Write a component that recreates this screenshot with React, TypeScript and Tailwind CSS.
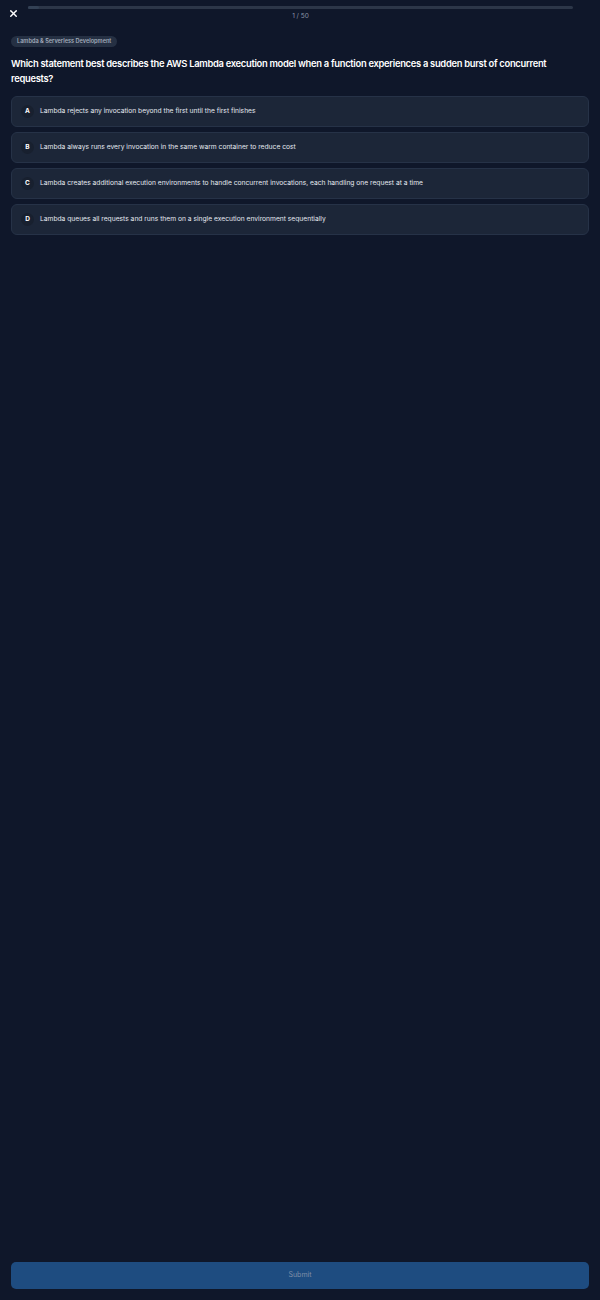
import { X } from 'lucide-react';

const OPTIONS = [
  { key: 'A', text: 'Lambda rejects any invocation beyond the first until the first finishes' },
  { key: 'B', text: 'Lambda always runs every invocation in the same warm container to reduce cost' },
  {
    key: 'C',
    text: 'Lambda creates additional execution environments to handle concurrent invocations, each handling one request at a time',
  },
  { key: 'D', text: 'Lambda queues all requests and runs them on a single execution environment sequentially' },
];

export default function App() {
  return (
    <div className="h-screen bg-[#0f172a] flex flex-col font-['Inter',sans-serif] text-white">
      {/* Top bar */}
      <div className="flex items-center pl-[8px] pr-[27px] pt-[6px]">
        <button className="w-[11px] h-[11px] flex items-center justify-center text-white">
          <X size={11} strokeWidth={3.2} />
        </button>
        <div className="flex-1 ml-[9px] flex flex-col items-center">
          <div className="w-full h-[3px] rounded-full bg-[#2c3648]">
            <div className="h-full w-[2%] rounded-full bg-[#334155]" />
          </div>
          <span className="mt-[3px] text-[6.5px] leading-[8px] text-[#8a94a6]">1 / 50</span>
        </div>
      </div>

      <div className="px-[11px] flex-1 flex flex-col">
        {/* Topic */}
        <div className="mt-[16px] flex">
          <span className="inline-flex items-center h-[11px] px-[6px] rounded-full bg-[#253043] text-[5.6px] leading-none font-semibold text-[#a3acbb]">
            Lambda &amp; Serverless Development
          </span>
        </div>

        {/* Question */}
        <h1 className="mt-[9px] text-[9.4px] leading-[15px] font-semibold tracking-[-0.3px] text-white">
          Which statement best describes the AWS Lambda execution model when a function experiences a sudden burst of
          concurrent requests?
        </h1>

        {/* Options */}
        <div className="mt-[10px] flex flex-col gap-[5px]">
          {OPTIONS.map((opt) => (
            <button
              key={opt.key}
              className="h-[31px] flex items-center gap-[6px] px-[9px] rounded-[6px] border border-[#263247] bg-[#1c2638] text-left"
            >
              <span className="w-[13px] h-[13px] shrink-0 rounded-full bg-[#18202f] flex items-center justify-center text-[6.5px] font-bold text-white">
                {opt.key}
              </span>
              <span className="text-[6.7px] text-[#e5e9f0]">{opt.text}</span>
            </button>
          ))}
        </div>

        {/* Submit */}
        <div className="mt-auto pb-[11px]">
          <button className="w-full h-[27px] rounded-[5px] bg-[#1e4c80] text-[7px] text-[#7f8fa8]">Submit</button>
        </div>
      </div>
    </div>
  );
}
